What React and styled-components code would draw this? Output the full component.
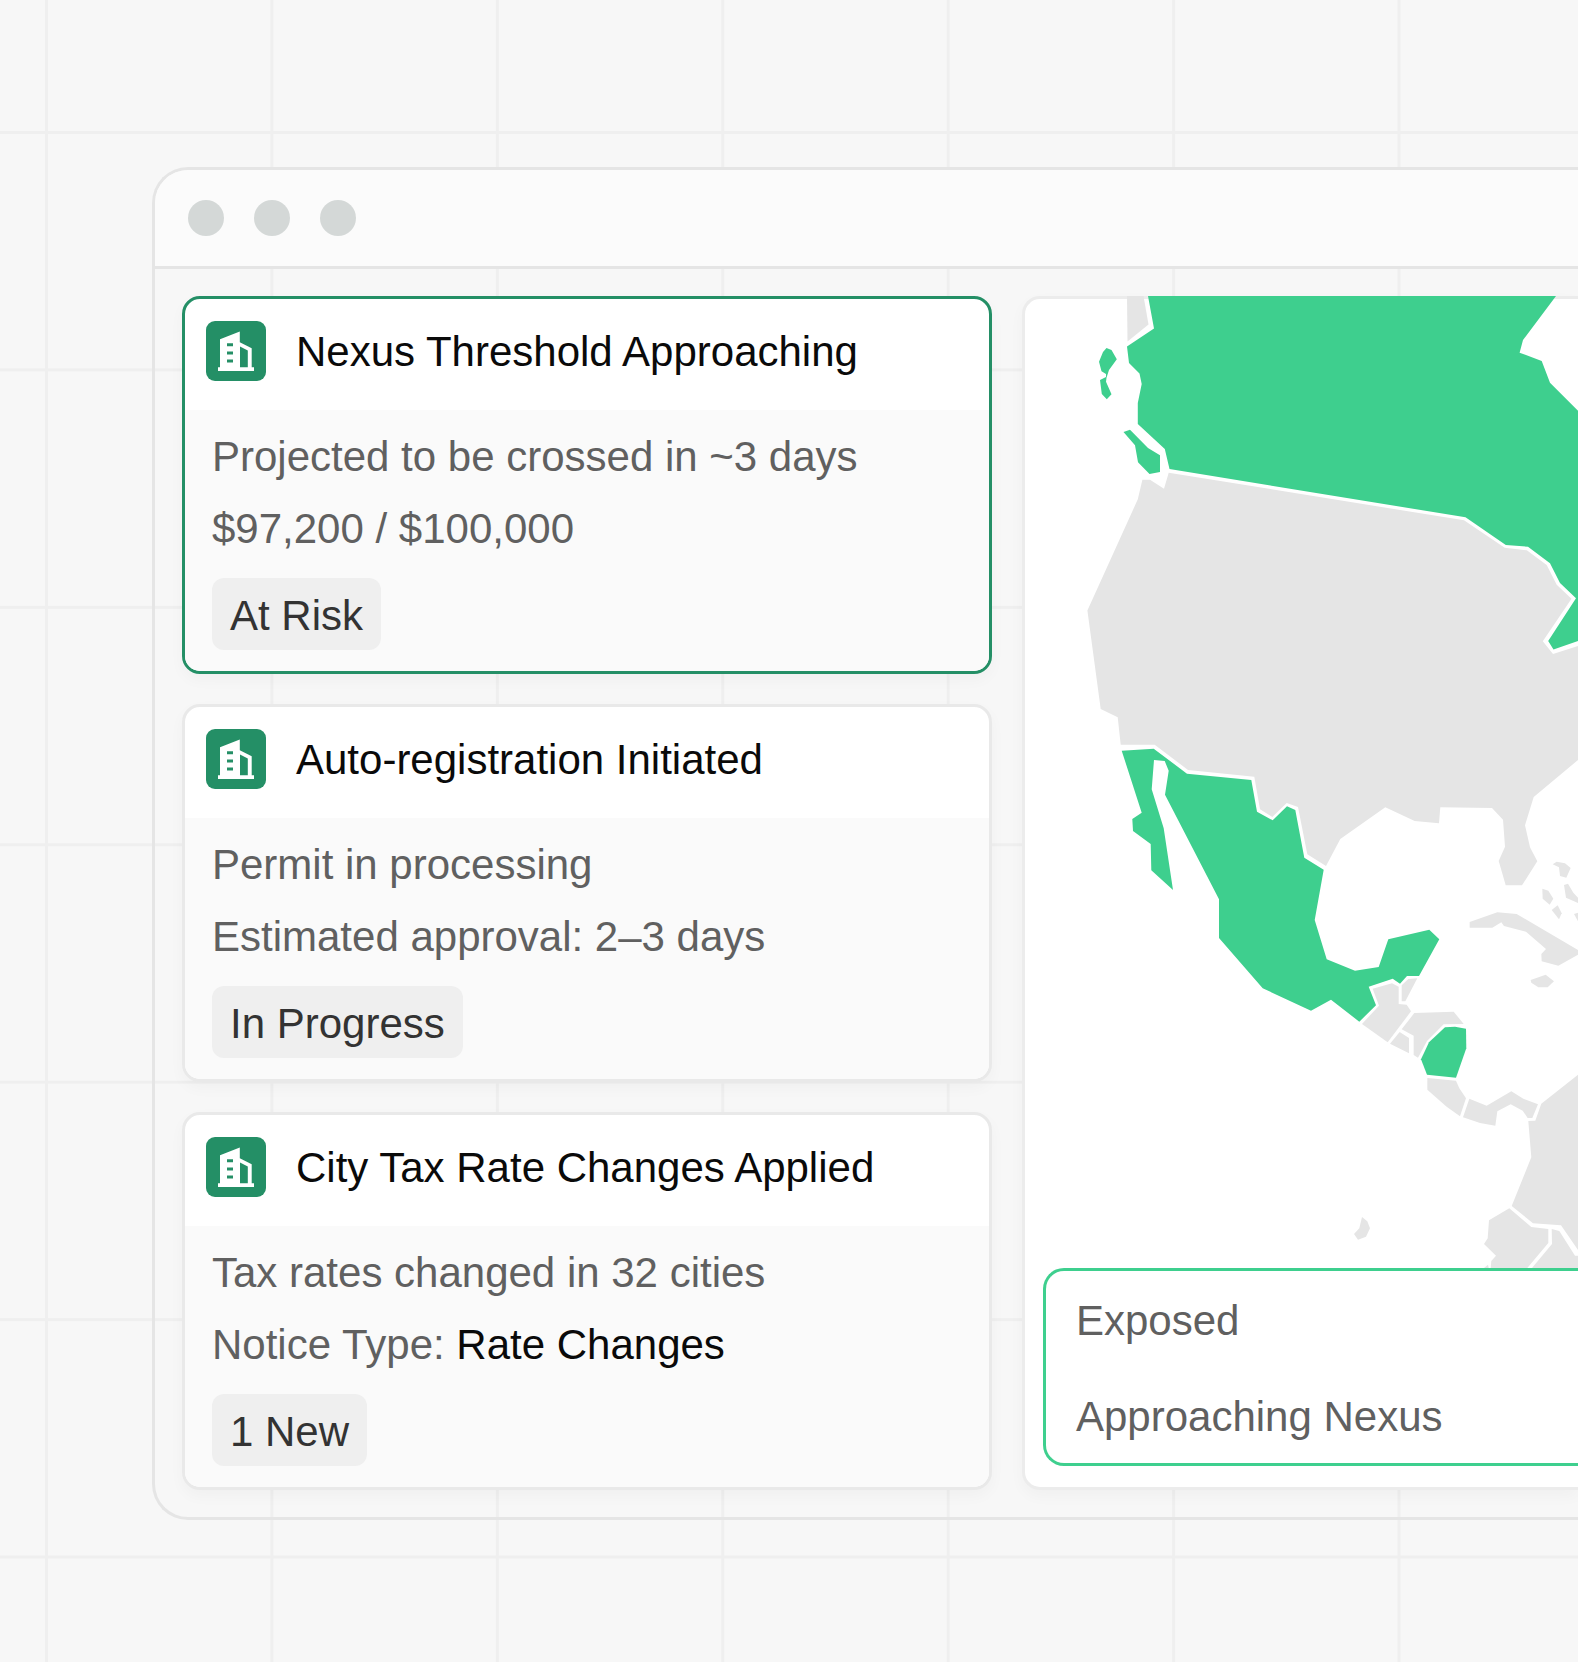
import React from "react";
import styled, { createGlobalStyle } from "styled-components";

const alerts = [
  {
    id: 1,
    title: "Nexus Threshold Approaching",
    lines: [{ text: "Projected to be crossed in ~3 days" }, { text: "$97,200 / $100,000" }],
    status: "At Risk",
    active: true,
  },
  {
    id: 2,
    title: "Auto-registration Initiated",
    lines: [{ text: "Permit in processing" }, { text: "Estimated approval: 2–3 days" }],
    status: "In Progress",
  },
  {
    id: 3,
    title: "City Tax Rate Changes Applied",
    lines: [{ text: "Tax rates changed in 32 cities" }, { text: "Notice Type: ", value: "Rate Changes" }],
    status: "1 New",
  },
];

const legend = ["Exposed", "Approaching Nexus"];

const BuildingIcon = () => (
  <svg width="60" height="60" viewBox="0 0 60 60" aria-hidden="true">
    <rect width="60" height="60" rx="9" fill="#248f66" />
    <path
      fill="#fff"
      fillRule="evenodd"
      d="M14 18.3 33.8 10.5V21.3L45.7 27.3V46.3H48V50H12V46.3H14ZM34 25.4V46.3H41.8V29.6ZM21 22.3V25.3H27V22.3ZM21 30.4V33.6H27V30.4ZM21 38.4V41.6H27V38.4Z"
    />
  </svg>
);

const NexusMap = () => (
  <MapSvg viewBox="1025 296 553 972" preserveAspectRatio="xMinYMin slice" role="img" aria-label="Nexus map">
    <g fill="#e5e5e5">
      {/* Alaska */}
      <path d="M1127 296H1143.5L1148.5 324.5 1127.5 341.5Z" />
      {/* United States */}
      <path d="M1142.4 479.7 1150 479.7 1164 488.7 1168.7 472.7 1464 520.3 1504.7 547.7 1526.8 550.3 1546.7 565 1556.7 584.7 1571.5 598.7 1542.8 641.3 1553 654 1578 646V760L1533.7 797 1525 825.3 1530 847.3 1537.3 861.3 1522 885.3H1505.7L1498.7 861 1505 846.7 1503 819.7 1492 808 1440.3 807.3 1439 823.3 1414.7 821 1385.3 807.3 1340.3 839 1326 866 1307.3 854.3 1298 807 1286.7 803 1272.3 817 1260 809.3 1254.3 776.7 1188 770 1154.7 744.7H1120.7L1117.7 717.3 1100.7 709 1087.4 610.5 1137.8 499.3Z" />
      {/* Colombia, Ecuador, Peru, Galapagos */}
      <path d="M1578 1074.7 1541.3 1103.7 1535.3 1120.7 1528.3 1121 1531.3 1157.3 1511.7 1206 1533 1223.3 1561 1225.3 1578 1250Z" />
      <path d="M1509.3 1208.3 1531.3 1227 1548.3 1229V1243L1527.3 1268H1490.7L1491.3 1261 1496 1255.7 1484 1244 1487.7 1238.3 1489 1220.3Z" />
      <path d="M1484 1268 1488 1264.7 1488.7 1268Z" />
      <path d="M1551.7 1229 1559.3 1231 1575 1255.7H1578V1268H1532L1552 1244Z" />
      <path d="M1362 1217 1367.3 1221.3 1370 1228.3 1366 1236.7 1358 1239.7 1354 1234 1359.3 1228.3Z" />
    </g>
    {/* Central America and the Caribbean, drawn at three times the map scale */}
    <g fill="#e5e5e5" transform="translate(1300 840) scale(0.33333)">
      <path d="M218 446 276 430 296 440V492L320 494 333 514 263 607 186 552 237 497Z" />
      <path d="M305 436 325 417 352 415 316 484H305Z" />
      <path d="M343 519 461 515 491 552 431 553 381 603 354 653 341 645V587L305 568Z" />
      <path d="M299 576 327 594V640L270 611Z" />
      <path d="M382 714 468 722 478 745 498 775 480 829 440 800 382 749Z" />
      <path d="M508 776 560 797 634 754 670 776 714 793 697 834H683L668 812 632 793 592 814 586 857 540 849 489 832Z" />
      <path d="M509 246 592 217 650 222 834 330V344L775 377 725 364 724 342 738 327 678 275 612 258 604 247 577 263H509Z" />
      <path d="M692 420 737 404 762 424 743 442H715L694 428Z" />
      <path d="M758 73 770 65 795 70 812 84 799 113 780 108 777 82Z" />
      <path d="M727 146 745 152 760 176 749 194 728 176Z" />
      <path d="M755 210 773 196 785 220 777 238Z" />
      <path d="M792 135 804 131 820 158 834 173V189L798 173Z" />
      <path d="M822 222 834 218V244Z" />
    </g>
    <g fill="#3ecf8e">
      {/* Canada */}
      <path d="M1148 296 1154 328.5 1127 346.5 1129 363 1139.5 373.5 1141.7 384 1137.8 403V424L1164.8 449 1169.5 469 1465.5 517.3 1505.8 545 1528 546.7 1550 563.3 1560 583 1576 598.3 1548.2 641 1553.5 649.5 1578 641V410.7L1550 382.7 1541.7 361 1519.6 352.7 1523 340 1556 296Z" />
      <path d="M1106.5 348 1111.5 350 1116.8 359.3 1109 370 1106.5 377.7 1106 381.7 1111.5 394.3 1106.8 399.3 1101.8 394 1100 380 1106 377 1106 374 1101.5 371.3 1099 361.7 1103 352Z" />
      <path d="M1123.5 432 1130 429.7 1148 448 1160 455.3V472L1149.5 474 1138 462.3 1135 445.3Z" />
      {/* Mexico */}
      <path d="M1121.7 750.7 1153.7 748.7 1187 773.7 1251.3 780 1257 811.7 1272.7 820.3 1287 806.3 1295.3 810 1304.3 857.7 1323.7 869.7 1314.7 920 1326.7 959.3 1355 970.7 1378.7 967 1388.3 939.3 1429.3 929.7 1439.3 939.3 1419 976H1407L1400 983.7 1392.7 978.7 1368.7 986.7 1376 1005.3 1359.3 1021.7 1331 999.7 1311 1010.7 1262.7 988.3 1219 938V899.3L1165 794.7 1168.7 770.7 1164.7 761 1154 760 1151.7 789.3 1163.7 828.3 1173 890 1151.3 870.3 1150.7 844 1133 831 1132.3 819 1141.7 812.7Z" />
      {/* Nicaragua */}
      <path d="M1445 1027.3 1455 1026.7 1466 1028.7 1466.3 1048.3 1456 1077.7 1427 1074.7 1421 1059.3 1429 1042.3Z" />
    </g>
  </MapSvg>
);

const App = () => {
  return (
    <Page>
      <GlobalStyle />
      <Window>
        <TitleBar>
          <Dot />
          <Dot />
          <Dot />
        </TitleBar>
        <Content>
          <AlertList>
            {alerts.map((alert) => (
              <AlertCard key={alert.id} $active={alert.active}>
                <CardHeader>
                  <BuildingIcon />
                  <CardTitle>{alert.title}</CardTitle>
                </CardHeader>
                <CardBody>
                  {alert.lines.map((line) => (
                    <CardLine key={line.text}>
                      {line.text}
                      {line.value && <LineValue>{line.value}</LineValue>}
                    </CardLine>
                  ))}
                  <StatusChip>{alert.status}</StatusChip>
                </CardBody>
              </AlertCard>
            ))}
          </AlertList>
          <MapPanel>
            <NexusMap />
            <Legend>
              {legend.map((label) => (
                <LegendItem key={label}>{label}</LegendItem>
              ))}
            </Legend>
          </MapPanel>
        </Content>
      </Window>
    </Page>
  );
};

export default App;

const GlobalStyle = createGlobalStyle`
  *, *::before, *::after {
    box-sizing: border-box;
  }
  body {
    margin: 0;
    font-family: "Liberation Sans", Arial, sans-serif;
    font-size: 42px;
  }
`;

const Page = styled.main`
  min-height: 100vh;
  padding: 167px 0 142px 152px;
  overflow: hidden;
  background-color: #f7f7f7;
  background-image: linear-gradient(to right, #efefef 3px, transparent 3px),
    linear-gradient(to bottom, #efefef 3px, transparent 3px);
  background-size: calc(100% / 7) calc(100% / 7);
  background-position: 45px 131px;
`;

const Window = styled.section`
  border: 3px solid #e5e5e5;
  border-right: 0;
  border-radius: 36px 0 0 36px;
`;

const TitleBar = styled.div`
  display: flex;
  gap: 30px;
  padding: 30px 33px;
  background: #fbfbfb;
  border-bottom: 3px solid #e5e5e5;
  border-top-left-radius: 33px;
`;

const Dot = styled.span`
  width: 36px;
  height: 36px;
  border-radius: 50%;
  background: #d4d8d7;
`;

const Content = styled.div`
  display: grid;
  grid-template-columns: minmax(0, 810fr) minmax(0, 556fr);
  gap: 30px;
  padding: 27px 0 27px 27px;
`;

const AlertList = styled.div`
  display: flex;
  flex-direction: column;
  gap: 30px;
`;

const AlertCard = styled.article`
  border: 3px solid ${({ $active }) => ($active ? "#248f66" : "#e9e9e9")};
  border-radius: 18px;
  background: #fff;
  box-shadow: 0 6px 15px rgba(0, 0, 0, 0.03);
  overflow: hidden;
`;

const CardHeader = styled.header`
  display: flex;
  gap: 30px;
  height: 111px;
  padding: 22px 21px;
`;

const CardTitle = styled.h2`
  margin: 0;
  font-size: 42px;
  font-weight: 400;
  line-height: 62px;
  color: #0a0a0a;
  white-space: nowrap;
`;

const CardBody = styled.div`
  display: flex;
  flex-direction: column;
  align-items: flex-start;
  padding: 11px 27px 21px;
  background: #fafafa;
`;

const CardLine = styled.p`
  margin: 0;
  line-height: 72px;
  color: #606060;
`;

const LineValue = styled.span`
  color: #0a0a0a;
`;

const StatusChip = styled.span`
  margin-top: 13px;
  padding: 4px 18px 0;
  border-radius: 12px;
  line-height: 68px;
  color: #333;
  background: #efefef;
`;

const MapPanel = styled.section`
  display: flex;
  flex-direction: column;
  border: 3px solid #ececec;
  border-right: 0;
  border-radius: 18px 0 0 18px;
  background: #fff;
  box-shadow: 0 6px 15px rgba(0, 0, 0, 0.03);
`;

const MapSvg = styled.svg`
  display: block;
  flex: 1;
  width: 100%;
  min-height: 0;
  margin-top: -3px;
`;

const Legend = styled.ul`
  margin: 0 0 21px 18px;
  padding: 0 30px;
  list-style: none;
  border: 3px solid #3ecf8e;
  border-right: 0;
  border-radius: 21px 0 0 21px;
`;

const LegendItem = styled.li`
  padding-top: 4px;
  line-height: 92px;
  color: #606060;
`;
